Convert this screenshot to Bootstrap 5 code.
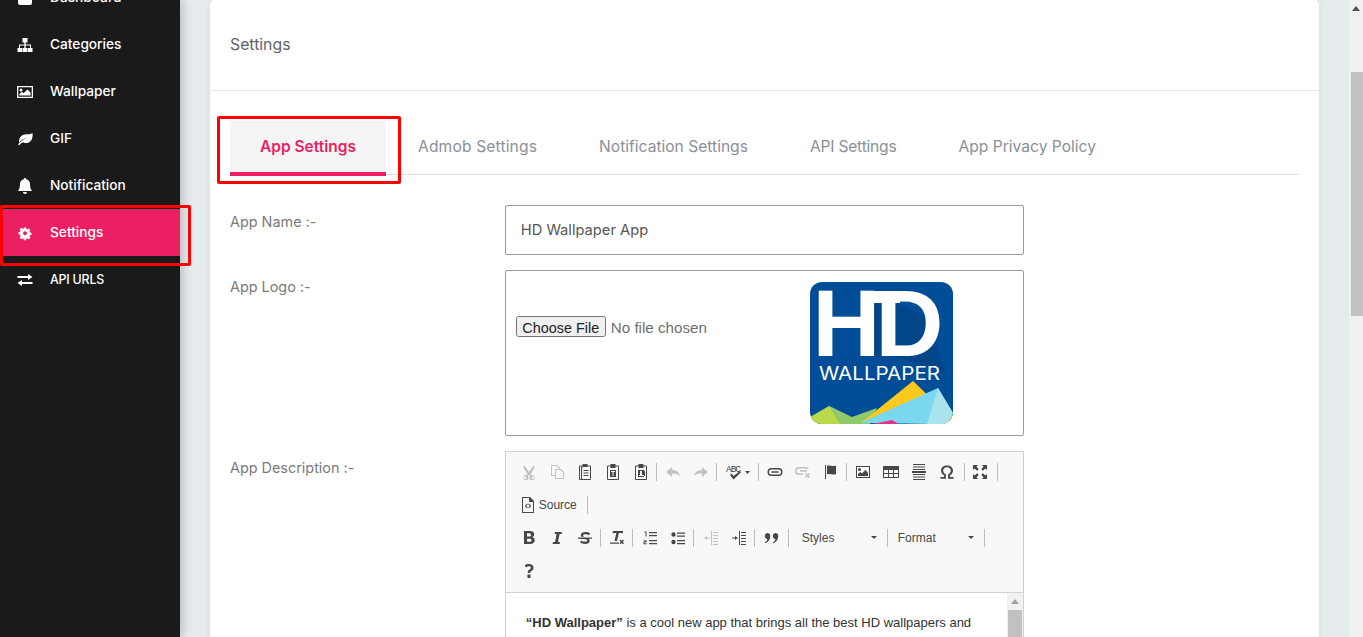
<!DOCTYPE html>
<html lang="en">
<head>
    <meta charset="UTF-8">
    <meta name="viewport" content="width=device-width, initial-scale=1.0">
    <title>Settings - HD Wallpaper App</title>
    <link href="https://cdn.jsdelivr.net/npm/bootstrap@5.3.0/dist/css/bootstrap.min.css" rel="stylesheet">
    <style>
        html, body { height: 100%; overflow: hidden; }
        body { font-family: Inter, "Liberation Sans", sans-serif; background: #e6ebee; }
        .shell { height: 637px; overflow: hidden; position: relative; }

        /* sidebar */
        .side { width: 180px; background: #1a1a1a; box-shadow: 2px 0 10px rgba(0,0,0,.22); z-index: 2; }
        .side-list { margin-top: -26px; }
        .side-link { height: 47px; padding-left: 17px; gap: 17px; color: #fff; font-size: 13.7px; font-weight: 500; text-decoration: none; }
        .side-link svg { width: 16px; height: 16px; fill: #fff; flex: none; }
        .side-link.on { background: #ec1f63; }
        .side-caps { font-size: 12.4px; letter-spacing: -.2px; padding-top: 1px; }

        /* page scrollbar */
        .page-bar { width: 14px; background: #f0f0f0; }
        .page-bar .arrow { height: 72px; padding-top: 6px; }
        .page-thumb { margin-left: 2px; height: 244px; background: #c1c1c1; }
        .up-tri { width: 0; height: 0; margin: 0 auto; border: 4px solid transparent; border-top: 0; border-bottom: 5px solid #505050; }

        /* main card */
        .main-col { min-width: 0; padding: 0 30px; }
        .panel { margin-top: -2px; background: #fff; border-radius: 8px 8px 0 0; box-shadow: 0 0 6px rgba(0,0,0,.06); height: 900px; }
        .panel-head { height: 93px; padding: 2px 20px 0; border-bottom: 1px solid #e4e8e8; color: #5f6368; font-size: 15.8px; }
        .panel-body { padding: 30px 20px 0; }

        .tabs-row { height: 54px; border-bottom: 1px solid #dcdcdc; margin-bottom: 30px; }
        .tab-item { padding: 0 30px 2px; height: 54px; margin-right: 2px; color: #8a9099; font-size: 15.6px; font-weight: 400; text-decoration: none; }
        .tab-item.on { background: #f5f5f5; color: #ec1f63; font-size: 15.5px; font-weight: 600; border-bottom: 4px solid #ec1f63; height: 55px; padding: 1px 30px 0; }
        .tab-loose { letter-spacing: .15px; }
        .tab-tight { letter-spacing: -.2px; }

        /* form rows */
        .form-line { --bs-gutter-x: 30px; margin-bottom: 15px; }
        .form-name { color: #7a7a7a; font-size: 14.4px; font-weight: 400; padding-top: 6px; }
        .text-box { height: 50px; border: 1px solid #9a9a9a; border-radius: 2px; padding: 0 15px; color: #555; font-size: 14.7px; font-weight: 400; }
        .logo-box { height: 166px; border: 1px solid #9a9a9a; border-radius: 2px; padding: 11px 70px 0 10px; }
        .logo-box input { color: #707070; font-family: "Liberation Sans", sans-serif; font-size: 15.2px; width: 220px; margin-top: 34px; }
        .logo-box input::file-selector-button { font-family: "Liberation Sans", sans-serif; font-size: 14.4px; color: #222; height: 21px; width: 90px; padding: 0; margin-right: 5px; }
        .logo-box svg { display: block; }

        /* rich text editor */
        .ed-box { border: 1px solid #d1d1d1; }
        .ed-tools { background: #f8f8f8; border-bottom: 1px solid #d1d1d1; padding: 3px 0 4px 9px; height: 141px; font-family: "Liberation Sans", sans-serif; }
        .ed-row { height: 33px; }
        .ed-btn { width: 28px; height: 33px; flex: none; }
        .ed-btn svg { width: 16px; height: 16px; fill: #474747; stroke: none; }
        .ed-btn.off svg { opacity: .3; }
        .ed-wide { width: 38px; }
        .ed-wide svg { width: 26px; }
        .ed-sep { width: 1px; height: 18px; background: #bcbcbc; margin: 0 2px 0 1px; flex: none; }
        .ed-sep-r { margin-right: 3px; }
        .ed-sep-l { margin-left: 3px; margin-right: 1px; }
        .ed-src { font-size: 12px; color: #474747; width: 71px; padding-left: 5px; gap: 3px; flex: none; }
        .ed-src svg { width: 16px; height: 16px; fill: #474747; }
        .ed-combo { width: 96px; padding: 0 9px 0 12px; font-size: 12px; color: #474747; flex: none; }
        .ed-combo-b { width: 93px; padding-left: 8px; }
        .ed-caret { width: 0; height: 0; border: 3px solid transparent; border-top: 3px solid #474747; border-bottom: 0; }
        .ed-text { height: 300px; padding: 20px 20px 0; font-family: "Liberation Sans", sans-serif; font-size: 13px; line-height: 19px; color: #333; }
        .ed-bar { width: 16px; background: #f1f1f1; flex: none; }
        .ed-bar .arrow { height: 17px; padding-top: 6px; }
        .ed-thumb { height: 200px; margin: 0 1px; background: #c1c1c1; }
        .ed-bar .up-tri { border-bottom-color: #a3a3a3; }

        /* red marks on the screenshot */
        .red-mark { position: absolute; border: 3px solid #f00; border-radius: 2px; z-index: 5; pointer-events: none; }
        .mark-side { left: 0; top: 205px; width: 191px; height: 61px; }
        .mark-tab { left: 217px; top: 116px; width: 184px; height: 68px; }
    </style>
</head>
<body>

<div class="shell d-flex">

    <!-- sidebar -->
    <div class="side flex-shrink-0">
        <div class="side-list d-flex flex-column">
            <a class="side-link d-flex align-items-center" href="#">
                <svg viewBox="0 0 16 16"><path d="M1 3a2 2 0 0 1 2-2h10a2 2 0 0 1 2 2v10a2 2 0 0 1-2 2H3a2 2 0 0 1-2-2z"/></svg>
                <span>Dashboard</span>
            </a>
            <a class="side-link d-flex align-items-center" href="#">
                <svg viewBox="0 0 16 16"><path d="M5.500 1h5v4.500H8.700v2H14V11h1.500v4h-4.500v-4h2V8.500H8.700V11h1.800v4h-5v-4h1.800V8.500H3V11h2v4H.5v-4H2V7.500h5.300v-2H5.500z"/></svg>
                <span>Categories</span>
            </a>
            <a class="side-link d-flex align-items-center" href="#">
                <svg viewBox="0 0 16 16"><path fill-rule="evenodd" d="M0 2h16v12H0zm1.300 1.300v9.400h13.400V3.300zM4 4.500a1.500 1.500 0 1 1 0 3 1.500 1.500 0 0 1 0-3zM2.500 11.500V10L5 7.800l1.500 1.500L10.500 5.500l3 3v3z"/></svg>
                <span>Wallpaper</span>
            </a>
            <a class="side-link d-flex align-items-center" href="#">
                <svg viewBox="0 0 16 16"><path d="M15.500 2c.5 3.500-.3 7-2.600 8.800-2.200 1.700-5 1.600-7 .4C4.500 12 3.200 13 2.200 14.300L1 13.600c1.500-2.300 4.500-5 8.500-6.300-3 .5-6 2.300-7.400 3.900C1.600 7.500 4 3.900 8 3.500c3-.3 5.700-.1 7.500-1.500z"/></svg>
                <span>GIF</span>
            </a>
            <a class="side-link d-flex align-items-center" href="#">
                <svg viewBox="0 0 16 16"><path d="M8 0a1.200 1.200 0 0 1 1.200 1.300C11.500 1.800 13 3.700 13 6c0 4 1 5.500 2 7H1c1-1.500 2-3 2-7 0-2.300 1.500-4.200 3.800-4.700A1.200 1.200 0 0 1 8 0zM6 14h4a2 2 0 0 1-4 0z"/></svg>
                <span>Notification</span>
            </a>
            <a class="side-link on d-flex align-items-center" href="#">
                <svg viewBox="0 0 16 16"><path fill-rule="evenodd" d="M6.600 1h2.800l.4 2 1.200.5 1.700-1.100 2 2-1.100 1.700.5 1.200 2 .4v2.800l-2 .4-.5 1.200 1.100 1.700-2 2-1.700-1.100-1.200.5-.4 2H6.600l-.4-2-1.200-.5-1.700 1.100-2-2 1.100-1.700L1.900 10l-2-.4V6.800l2-.4.5-1.200L1.300 3.400l2-2L5 2.500 6.200 3zM8 5.700a2.500 2.500 0 1 0 0 5 2.500 2.500 0 0 0 0-5z" transform="translate(1.600 1.600) scale(.8)"/></svg>
                <span>Settings</span>
            </a>
            <a class="side-link d-flex align-items-center" href="#">
                <svg viewBox="0 0 16 16"><path d="M11 2l4.500 3L11 8V6H.5V4H11zM5 8v2h10.500v2H5v2L.5 11z"/></svg>
                <span class="side-caps">API URLS</span>
            </a>
        </div>
    </div>

    <!-- content -->
    <div class="main-col flex-grow-1">
        <div class="panel">
            <div class="panel-head d-flex align-items-center">Settings</div>
            <div class="panel-body">

                <div class="tabs-row d-flex">
                    <a class="tab-item on d-flex align-items-center" href="#">App Settings</a>
                    <a class="tab-item tab-loose d-flex align-items-center" href="#">Admob Settings</a>
                    <a class="tab-item d-flex align-items-center" href="#">Notification Settings</a>
                    <a class="tab-item tab-tight d-flex align-items-center" href="#">API Settings</a>
                    <a class="tab-item d-flex align-items-center" href="#">App Privacy Policy</a>
                </div>

                <div class="row form-line">
                    <div class="col-3 form-name">App Name :-</div>
                    <div class="col-6"><div class="text-box d-flex align-items-center">HD Wallpaper App</div></div>
                </div>

                <div class="row form-line">
                    <div class="col-3 form-name">App Logo :-</div>
                    <div class="col-6">
                        <div class="logo-box d-flex justify-content-between align-items-start">
                            <input type="file">
                            <svg width="143" height="142" viewBox="0 0 143 142">
                                <defs><clipPath id="logoClip"><rect width="143" height="142" rx="12"/></clipPath></defs>
                                <g clip-path="url(#logoClip)">
                                    <rect width="143" height="142" fill="#024d98"/>
                                    <polygon points="63,20 84,20 118,36 135,90 84,75 63,75" fill="#02468a"/>
                                    <polygon points="0,135 19,124 50,140 30,142 5,142" fill="#b9d84a"/>
                                    <polygon points="19,124 42,135 67,126 60,142 30,142" fill="#8fc96a"/>
                                    <polygon points="52,140 103,99 127,122 143,135 137,142" fill="#fcc91c"/>
                                    <polygon points="50,141 128,106 143,131 137,142" fill="#79d8f0"/>
                                    <polygon points="128,106 117,142 137,142 143,131" fill="#a9e3ec"/>
                                    <polygon points="63,142 82,138 89,142" fill="#e6308a"/>
                                    <rect x="60" y="9" width="30" height="12" fill="#fff"/>
                                    <text x="2.400 65.400" y="74" font-family="Liberation Sans" font-weight="700" font-size="94" fill="#fff">HD</text>
                                    <text x="9" y="98" font-family="Inter" font-size="18" fill="#fff" textLength="121" lengthAdjust="spacingAndGlyphs">WALLPAPER</text>
                                </g>
                            </svg>
                        </div>
                    </div>
                </div>

                <div class="row form-line">
                    <div class="col-3 form-name">App Description :-</div>
                    <div class="col-6">
                        <div class="ed-box">
                            <div class="ed-tools">
                                <div class="ed-row d-flex align-items-center">
                                    <span class="ed-btn off d-flex align-items-center justify-content-center"><svg viewBox="0 0 16 16"><path fill-rule="evenodd" d="M3 1l5 7 5-7 .5 3L9.500 10l1 1.200a2.600 2.600 0 1 1-1.500 1L8 11l-1 1.200a2.600 2.600 0 1 1-1.500-1l1-1.200L2.500 4zM4 12.500a1.300 1.300 0 1 0 0 2.600 1.300 1.300 0 0 0 0-2.600zm8 0a1.300 1.300 0 1 0 0 2.600 1.300 1.300 0 0 0 0-2.600z"/></svg></span>
                                    <span class="ed-btn off d-flex align-items-center justify-content-center"><svg viewBox="0 0 16 16"><path fill-rule="evenodd" d="M2 1h6l3 3v1h1l3 3v7H6v-3H2zm1 1v9h3V5h4V4.500L7.500 2zm4 4v8h7V8.500L11.500 6z"/></svg></span>
                                    <span class="ed-btn d-flex align-items-center justify-content-center"><svg viewBox="0 0 16 16"><path fill-rule="evenodd" d="M5.500 0h5v1.500H13a1 1 0 0 1 1 1V15a1 1 0 0 1-1 1H3a1 1 0 0 1-1-1V2.500a1 1 0 0 1 1-1h2.500zM3 2.500V15h1V3h1.500v-.5zm7.500 0V3H5.500v1H5v11h8V2.500zM6.500 6h5v1h-5zm0 2.500h5v1h-5zm0 2.500h5v1h-5z"/></svg></span>
                                    <span class="ed-btn d-flex align-items-center justify-content-center"><svg viewBox="0 0 16 16"><path fill-rule="evenodd" d="M5.500 0h5v1.500H13a1 1 0 0 1 1 1V15a1 1 0 0 1-1 1H3a1 1 0 0 1-1-1V2.500a1 1 0 0 1 1-1h2.500zM3 2.500V15h10V2.500h-2.500V4h-5V2.500zM5 6h6v7H5zm1 1v1h1.500v4h1V8H10V7z"/></svg></span>
                                    <span class="ed-btn d-flex align-items-center justify-content-center"><svg viewBox="0 0 16 16"><path fill-rule="evenodd" d="M5.500 0h5v1.500H13a1 1 0 0 1 1 1V15a1 1 0 0 1-1 1H3a1 1 0 0 1-1-1V2.500a1 1 0 0 1 1-1h2.500zM3 2.500V15h10V2.500h-2.500V4h-5V2.500zM5 6h6v7H5zm1 1v5h6V7h-1v4H9V7H7v4H6V7z"/></svg></span>
                                    <span class="ed-sep"></span>
                                    <span class="ed-btn off d-flex align-items-center justify-content-center"><svg viewBox="0 0 16 16"><path d="M7 3v3c4 0 7 2 8 6-2-2-5-2.700-8-2.500V13L1 8z"/></svg></span>
                                    <span class="ed-btn off d-flex align-items-center justify-content-center"><svg viewBox="0 0 16 16"><path d="M9 3v3c-4 0-7 2-8 6 2-2 5-2.700 8-2.500V13l6-5z"/></svg></span>
                                    <span class="ed-sep"></span>
                                    <span class="ed-btn ed-wide d-flex align-items-center justify-content-center"><svg viewBox="0 0 26 16"><text x="1" y="8" font-family="Liberation Mono" font-size="9.500" textLength="15">ABC</text><path d="M5 11l1.500-1.500L8.500 12 15 7l1 1.300L8.500 15.500zM20 7h5l-2.500 3z"/></svg></span>
                                    <span class="ed-sep"></span>
                                    <span class="ed-btn d-flex align-items-center justify-content-center"><svg viewBox="0 0 16 16"><path fill-rule="evenodd" d="M4.500 4h7a4 4 0 0 1 0 8h-7a4 4 0 0 1 0-8zm0 1.500a2.500 2.500 0 0 0 0 5h7a2.500 2.500 0 0 0 0-5zM4.500 7.300h7v1.400h-7z"/></svg></span>
                                    <span class="ed-btn off d-flex align-items-center justify-content-center"><svg viewBox="0 0 16 16"><path fill-rule="evenodd" d="M4 3h7a3.500 3.500 0 0 1 3 2h-2a2 2 0 0 0-1-.5H4a2.500 2.500 0 0 0 0 5h4V11H4a4 4 0 0 1 0-8zm1 3.300h7v1.400H5zM10 10l1 -1 1.500 1.500L14 9l1 1-1.500 1.500L15 13l-1 1-1.500-1.500L11 14l-1-1 1.500-1.500z"/></svg></span>
                                    <span class="ed-btn d-flex align-items-center justify-content-center"><svg viewBox="0 0 16 16"><path d="M2 1h1v14H2zM4 2c3-1.500 5 1 9-.5V10c-4 1.500-6-1-9 .5z"/></svg></span>
                                    <span class="ed-sep"></span>
                                    <span class="ed-btn d-flex align-items-center justify-content-center"><svg viewBox="0 0 16 16"><path fill-rule="evenodd" d="M1 2h14v12H1zm1 1v10h12V3zm2.500 1a1.500 1.500 0 1 1 0 3 1.500 1.500 0 0 1 0-3zM3 12V10l2.500-2L7 9.500 10.500 6 13 9v3z"/></svg></span>
                                    <span class="ed-btn d-flex align-items-center justify-content-center"><svg viewBox="0 0 16 16"><path fill-rule="evenodd" d="M0 2h16v12H0zm1 4v3h4V6zm5 0v3h4V6zm5 0v3h4V6zM1 10v3h4v-3zm5 0v3h4v-3zm5 0v3h4v-3z"/></svg></span>
                                    <span class="ed-btn d-flex align-items-center justify-content-center"><svg viewBox="0 0 16 16"><path d="M2 0h12v1H2zM2 2.500h12v1H2zM2 5h12v1H2zM1 7h14v2H1zM2 10h12v1H2zM2 12.500h12v1H2zM2 15h12v1H2z"/></svg></span>
                                    <span class="ed-btn d-flex align-items-center justify-content-center"><svg viewBox="0 0 16 16"><path d="M1.500 13h3.700v-1.500C3 10.300 2 8.500 2 6.500 2 3.500 4.500 1.500 8 1.500s6 2 6 5c0 2-1 3.800-3.200 5V13h3.700v1.800H9v-4.300c1.800-.8 2.800-2.200 2.800-4 0-2-1.500-3.300-3.800-3.300S4.200 4.500 4.200 6.500c0 1.800 1 3.200 2.800 4v4.300H1.500z"/></svg></span>
                                    <span class="ed-sep ed-sep-l"></span>
                                    <span class="ed-btn d-flex align-items-center justify-content-center"><svg viewBox="0 0 16 16"><path d="M1 1h5L4.500 2.700 6.800 5 5 6.800 2.700 4.500 1 6zM15 1v5l-1.700-1.500L11 6.800 9.200 5l2.300-2.300L10 1zM1 15v-5l1.700 1.500L5 9.200 6.800 11l-2.300 2.300L6 15zM15 15h-5l1.500-1.700L9.200 11 11 9.200l2.300 2.300L15 10z"/></svg></span>
                                    <span class="ed-sep ed-sep-l"></span>
                                </div>
                                <div class="ed-row d-flex align-items-center">
                                    <span class="ed-src d-flex align-items-center"><svg viewBox="0 0 16 16"><path fill-rule="evenodd" d="M2 0h8l4 4v12H2zm1 1v14h10V5H9V1zM7 6.500 4.800 9 7 11.500l.7-.7L6.200 9l1.500-1.800zm2 0-.7.700L9.800 9l-1.500 1.800.7.700L11.200 9z"/></svg><span>Source</span></span>
                                    <span class="ed-sep"></span>
                                </div>
                                <div class="ed-row d-flex align-items-center">
                                    <span class="ed-btn d-flex align-items-center justify-content-center"><svg viewBox="0 0 16 16"><path fill-rule="evenodd" d="M3 1h6c2.700 0 4.200 1.200 4.200 3.300 0 1.300-.7 2.300-1.900 2.800 1.500.4 2.400 1.500 2.400 3.100C13.700 12.700 11.900 14 9 14H3zm3 2.300V6.500h2.500c1 0 1.600-.5 1.600-1.200s-.6-2-1.600-2zM6 8.700v3h2.800c1.100 0 1.800-.6 1.800-1.500S10 8.700 8.800 8.700z"/></svg></span>
                                    <span class="ed-btn d-flex align-items-center justify-content-center"><svg viewBox="0 0 16 16"><path d="M6 2h7l-.4 2h-2L9 12h2l-.4 2h-7l.4-2h2L7.600 4h-2z"/></svg></span>
                                    <span class="ed-btn d-flex align-items-center justify-content-center"><svg viewBox="0 0 16 16"><path d="M8.500 2c2 0 3.500.5 4.500 1.300l-.8 2C11.200 4.600 10 4.200 8.500 4.200c-1.500 0-2.300.5-2.300 1.300 0 .6.400 1 1.300 1.300H4.300C4 6.300 3.800 5.800 3.800 5.200 3.800 3.200 5.800 2 8.500 2zM1 7.500h14v1.200h-3.200c.6.600.9 1.300.9 2.100 0 2.100-2 3.200-4.700 3.200-2 0-3.700-.5-4.900-1.400l.9-2c1 .8 2.400 1.200 3.900 1.200 1.500 0 2.300-.4 2.300-1.200 0-.7-.5-1.100-1.500-1.400L1 8.700z"/></svg></span>
                                    <span class="ed-sep"></span>
                                    <span class="ed-btn d-flex align-items-center justify-content-center"><svg viewBox="0 0 16 16"><path d="M4 1h10v2.300h-1L12.500 3H9.800L8 11h-2.500L7.300 3H4.500L4 3.300H3.500zM1 12.500h9v1.300H1zM10.500 10.500l1-1 1.300 1.300L14 9.500l1 1-1.300 1.300L15 13.300l-1 1-1.200-1.300-1.300 1.300-1-1 1.300-1.300z"/></svg></span>
                                    <span class="ed-sep ed-sep-r"></span>
                                    <span class="ed-btn d-flex align-items-center justify-content-center"><svg viewBox="0 0 16 16"><path d="M7 2h8v1.200H7zM7 5h8v1.200H7zM7 10h8v1.200H7zM7 13h8v1.200H7zM2.500 1.500h2v5h-1V2.500h-1zM1.500 10h3v2.300H2.500v1h2.200v1H1.500v-3h2v-.8h-2z"/></svg></span>
                                    <span class="ed-btn d-flex align-items-center justify-content-center"><svg viewBox="0 0 16 16"><path d="M7 2.500h8v1.300H7zM7 5.500h8v1.300H7zM7 10h8v1.300H7zM7 13h8v1.300H7zM3.500 2.300a2.200 2.200 0 1 1 0 4.400 2.200 2.200 0 0 1 0-4.400zM3.500 9.800a2.200 2.200 0 1 1 0 4.400 2.200 2.200 0 0 1 0-4.400z"/></svg></span>
                                    <span class="ed-sep ed-sep-r"></span>
                                    <span class="ed-btn off d-flex align-items-center justify-content-center"><svg viewBox="0 0 16 16"><path d="M8 1h1v14H8zM10 2h5v1h-5zM10 5h5v1h-5zM10 8h5v1h-5zM10 11h5v1h-5zM10 14h5v1h-5zM7 7.500H4V6L1 8l3 2V8.500h3z"/></svg></span>
                                    <span class="ed-btn d-flex align-items-center justify-content-center"><svg viewBox="0 0 16 16"><path d="M8 1h1v14H8zM10 2h5v1h-5zM10 5h5v1h-5zM10 8h5v1h-5zM10 11h5v1h-5zM10 14h5v1h-5zM1 7.500h3V6l3 2-3 2V8.500H1z"/></svg></span>
                                    <span class="ed-sep"></span>
                                    <span class="ed-btn d-flex align-items-center justify-content-center"><svg viewBox="0 0 16 16"><path d="M4 3a3.200 3.200 0 0 1 3.200 3.300c0 3.500-2.200 6-5 7l-.5-.8c1.500-.8 2.500-2 2.700-3.300A3.200 3.200 0 0 1 4 3zM12 3a3.200 3.200 0 0 1 3.200 3.300c0 3.500-2.200 6-5 7l-.5-.8c1.500-.8 2.500-2 2.700-3.300A3.200 3.200 0 0 1 12 3z"/></svg></span>
                                    <span class="ed-sep ed-sep-l"></span>
                                    <span class="ed-combo d-flex align-items-center justify-content-between"><span>Styles</span><i class="ed-caret"></i></span>
                                    <span class="ed-sep"></span>
                                    <span class="ed-combo ed-combo-b d-flex align-items-center justify-content-between"><span>Format</span><i class="ed-caret"></i></span>
                                    <span class="ed-sep"></span>
                                </div>
                                <div class="ed-row d-flex align-items-center">
                                    <span class="ed-btn d-flex align-items-center justify-content-center"><svg viewBox="0 0 16 16"><path d="M8 1c2.800 0 4.500 1.400 4.500 3.700 0 1.600-.8 2.500-2 3.300-.9.600-1.300 1-1.300 2H6.700c0-1.800.7-2.700 1.800-3.400.8-.5 1.300-1 1.300-1.800 0-1-.7-1.500-1.900-1.500-1 0-2 .4-2.900 1.100L3.800 2.300C5 1.500 6.400 1 8 1zM6.500 11.500h3V15h-3z"/></svg></span>
                                </div>
                            </div>
                            <div class="d-flex">
                                <div class="ed-text flex-grow-1"><strong>“HD Wallpaper”</strong> is a cool new app that brings all the best HD wallpapers and</div>
                                <div class="ed-bar">
                                    <div class="arrow"><div class="up-tri"></div></div>
                                    <div class="ed-thumb"></div>
                                </div>
                            </div>
                        </div>
                    </div>
                </div>

            </div>
        </div>
    </div>

    <!-- page scrollbar -->
    <div class="page-bar flex-shrink-0">
        <div class="arrow"><div class="up-tri"></div></div>
        <div class="page-thumb"></div>
    </div>

    <div class="red-mark mark-side"></div>
    <div class="red-mark mark-tab"></div>
</div>

<script src="https://cdn.jsdelivr.net/npm/bootstrap@5.3.0/dist/js/bootstrap.bundle.min.js"></script>
</body>
</html>
